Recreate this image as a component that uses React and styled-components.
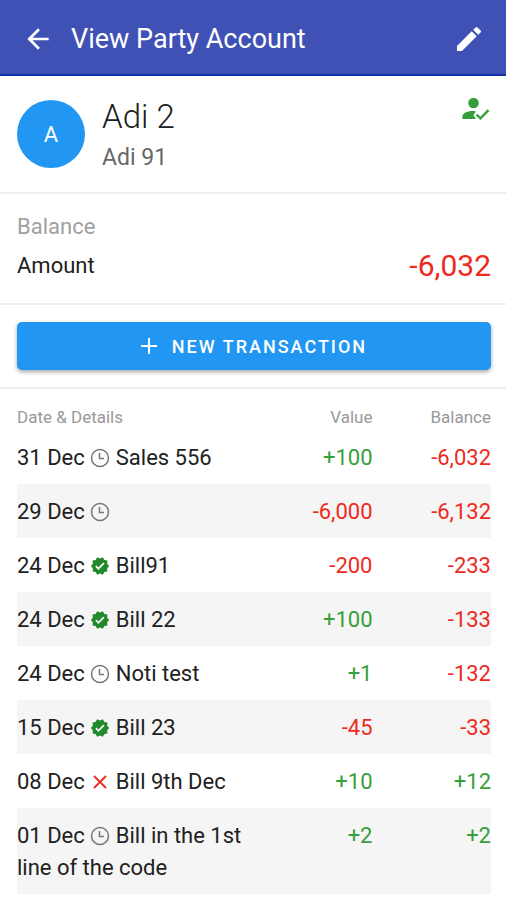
import React from 'react';
import styled, { createGlobalStyle } from 'styled-components';
import { MdArrowBack, MdEdit, MdVerified } from 'react-icons/md';

const GlobalStyle = createGlobalStyle`
  * {
    box-sizing: border-box;
  }

  body {
    margin: 0;
    background-color: #fff;
    color: #212121;
    font-family: Roboto, "Liberation Sans", sans-serif;
  }
`;

const tones = {
  positive: '#35a03b',
  negative: '#ee2a20',
};

const Header = styled.header`
  display: flex;
  align-items: center;
  gap: 17px;
  height: 76px;
  padding: 3px 21px 0 22px;
  background-color: #3f51b5;
  border-bottom: 2px solid #1233a0;
  color: white;
`;

const HeaderTitle = styled.h1`
  flex: 1;
  margin: 0;
  font-size: 27px;
  line-height: 32px;
  font-weight: 400;
`;

const IconButton = styled.button`
  display: flex;
  padding: 0;
  border: none;
  background: none;
  color: inherit;
  font-size: 32px;
  cursor: pointer;
`;

const Section = styled.section`
  padding: 17px 15px 17px 17px;
  border-bottom: 2px solid #eeeeee;
`;

const Party = styled.div`
  display: flex;
  align-items: flex-start;
  gap: 17px;
`;

const Avatar = styled.div`
  display: flex;
  align-items: center;
  justify-content: center;
  width: 68px;
  height: 68px;
  margin: 7px 0;
  border-radius: 50%;
  background-color: #2196f3;
  color: white;
  font-size: 22px;
`;

const PartyText = styled.div`
  flex: 1;
  margin: 7px 0;
`;

const PartyName = styled.h2`
  margin: 0;
  font-size: 33px;
  line-height: 34px;
  font-weight: 300;
`;

const PartyNote = styled.p`
  margin: 14px 0 0;
  color: #666;
  font-size: 23px;
  line-height: 20px;
`;

const SectionLabel = styled.h3`
  margin: 0;
  color: #a0a0a0;
  font-size: 22px;
  line-height: 32px;
  font-weight: 400;
`;

const AmountRow = styled.div`
  display: flex;
  align-items: center;
  justify-content: space-between;
  margin-top: 3px;
  font-size: 22px;
  line-height: 40px;
`;

const Amount = styled.span`
  color: ${tones.negative};
  font-size: 30px;
`;

const NewButton = styled.button`
  display: flex;
  align-items: center;
  justify-content: center;
  gap: 15px;
  width: 100%;
  height: 48px;
  padding: 0;
  border: none;
  border-radius: 5px;
  background-color: #2196f3;
  box-shadow: 0 2px 4px rgba(0, 0, 0, 0.35);
  color: white;
  font-family: inherit;
  font-size: 18px;
  font-weight: 500;
  letter-spacing: 2px;
  cursor: pointer;
`;

const TableWrap = styled.div`
  padding: 0 15px 0 17px;
`;

const Table = styled.table`
  width: 100%;
  table-layout: fixed;
  border-collapse: collapse;
`;

const HeadCell = styled.th`
  width: ${props => props.$width};
  padding: 16px 0 1px;
  color: #999;
  font-size: 17px;
  line-height: 24px;
  font-weight: 400;
  text-align: ${props => props.$align || 'left'};
`;

const Row = styled.tr`
  &:nth-child(even) {
    background-color: #f5f5f5;
  }
`;

const Cell = styled.td`
  padding: 12px 0 10px;
  font-size: 22px;
  line-height: 32px;
  vertical-align: top;
`;

const NumberCell = styled(Cell)`
  color: ${props => tones[props.$tone]};
  text-align: right;
`;

const StatusIcon = styled.svg`
  width: 20px;
  height: 20px;
  vertical-align: -3px;
`;

const PersonCheck = () => (
  <svg width="30" height="30" viewBox="0 0 30 30" role="img" aria-label="Verified party">
    <circle cx="12.500" cy="10" r="5.300" fill="#35a03b" />
    <path d="M1.300 26v-1.800c0-4 4.700-6.200 10.200-6.200 1.200 0 2.300.1 3.300.4l-2.300 3.800 2.500 3.800z" fill="#35a03b" />
    <path d="M15.500 21.500l4 3.900 8-8.200" fill="none" stroke="#35a03b" strokeWidth="2.400" />
  </svg>
);

const Status = ({ type }) => {
  if (type === 'verified') {
    return <StatusIcon as={MdVerified} color="#21882b" title="Verified" />;
  }
  if (type === 'rejected') {
    return (
      <StatusIcon viewBox="0 0 20 20" role="img" aria-label="Rejected">
        <path d="M4 4l12 12M16 4L4 16" fill="none" stroke="#ee2a20" strokeWidth="1.800" />
      </StatusIcon>
    );
  }
  return (
    <StatusIcon viewBox="0 0 20 20" role="img" aria-label="Pending">
      <circle cx="10" cy="10" r="8.500" fill="none" stroke="#777" strokeWidth="1.500" />
      <path d="M9.500 5v5.500H14" fill="none" stroke="#777" strokeWidth="1.500" />
    </StatusIcon>
  );
};

const transactions = [
  { date: '31 Dec', status: 'pending', details: 'Sales 556', value: '+100', balance: '-6,032' },
  { date: '29 Dec', status: 'pending', details: '', value: '-6,000', balance: '-6,132' },
  { date: '24 Dec', status: 'verified', details: 'Bill91', value: '-200', balance: '-233' },
  { date: '24 Dec', status: 'verified', details: 'Bill 22', value: '+100', balance: '-133' },
  { date: '24 Dec', status: 'pending', details: 'Noti test', value: '+1', balance: '-132' },
  { date: '15 Dec', status: 'verified', details: 'Bill 23', value: '-45', balance: '-33' },
  { date: '08 Dec', status: 'rejected', details: 'Bill 9th Dec', value: '+10', balance: '+12' },
  { date: '01 Dec', status: 'pending', details: 'Bill in the 1st line of the code', value: '+2', balance: '+2' },
];

const toneOf = (value) => (value.startsWith('-') ? 'negative' : 'positive');

const App = () => {
  return (
    <>
      <GlobalStyle />
      <Header>
        <IconButton aria-label="Back"><MdArrowBack /></IconButton>
        <HeaderTitle>View Party Account</HeaderTitle>
        <IconButton aria-label="Edit"><MdEdit /></IconButton>
      </Header>
      <main>
        <Section>
          <Party>
            <Avatar>A</Avatar>
            <PartyText>
              <PartyName>Adi 2</PartyName>
              <PartyNote>Adi 91</PartyNote>
            </PartyText>
            <PersonCheck />
          </Party>
        </Section>
        <Section>
          <SectionLabel>Balance</SectionLabel>
          <AmountRow>
            <span>Amount</span>
            <Amount>-6,032</Amount>
          </AmountRow>
        </Section>
        <Section>
          <NewButton>
            <svg width="16" height="16" viewBox="0 0 16 16" aria-hidden="true">
              <path d="M8 0v16M0 8h16" stroke="currentColor" strokeWidth="2" />
            </svg>
            NEW TRANSACTION
          </NewButton>
        </Section>
        <TableWrap>
          <Table>
            <thead>
              <tr>
                <HeadCell $width="50%">Date &amp; Details</HeadCell>
                <HeadCell $width="25%" $align="right">Value</HeadCell>
                <HeadCell $width="25%" $align="right">Balance</HeadCell>
              </tr>
            </thead>
            <tbody>
              {transactions.map((item, index) => (
                <Row key={index}>
                  <Cell>
                    {item.date} <Status type={item.status} /> {item.details}
                  </Cell>
                  <NumberCell $tone={toneOf(item.value)}>{item.value}</NumberCell>
                  <NumberCell $tone={toneOf(item.balance)}>{item.balance}</NumberCell>
                </Row>
              ))}
            </tbody>
          </Table>
        </TableWrap>
      </main>
    </>
  );
};

export default App;
